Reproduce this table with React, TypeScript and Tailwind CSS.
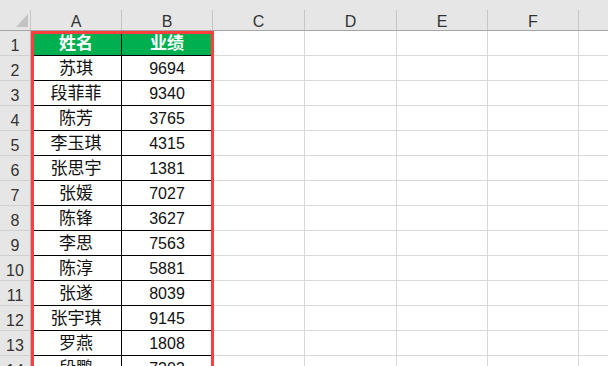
import type { FC } from "react";

const rows: [string, string][] = [
  ["苏琪", "9694"],
  ["段菲菲", "9340"],
  ["陈芳", "3765"],
  ["李玉琪", "4315"],
  ["张思宇", "1381"],
  ["张媛", "7027"],
  ["陈锋", "3627"],
  ["李思", "7563"],
  ["陈淳", "5881"],
  ["张遂", "8039"],
  ["张宇琪", "9145"],
  ["罗燕", "1808"],
  ["段鹏", "7303"],
];

const cols = [
  { name: "A", w: "w-[91px]" },
  { name: "B", w: "w-[91px]" },
  { name: "C", w: "w-[92px]" },
  { name: "D", w: "w-[92px]" },
  { name: "E", w: "w-[91px]" },
  { name: "F", w: "w-[91px]" },
];

const font = { fontFamily: '"Liberation Sans", "Noto Sans CJK SC", sans-serif' };

const EmptyCells: FC = () => (
  <>
    <div className="w-[92px] shrink-0 border-r border-b border-[#d9d9d9]" />
    <div className="w-[92px] shrink-0 border-r border-b border-[#d9d9d9]" />
    <div className="w-[91px] shrink-0 border-r border-b border-[#d9d9d9]" />
    <div className="w-[91px] shrink-0 border-r border-b border-[#d9d9d9]" />
    <div className="flex-1 border-b border-[#d9d9d9]" />
  </>
);

const RowHead: FC<{ n: number }> = ({ n }) => (
  <div className="w-[31px] shrink-0 bg-[#e6e6e6] border-b border-r border-b-[#d0d0d0] border-r-[#b5b5b5] flex items-center justify-center pt-[5px] text-[16px] text-[#333]">
    {n}
  </div>
);

export default function App() {
  return (
    <div className="w-[608px] h-[366px] overflow-hidden bg-white relative" style={font}>
      <div className="h-[10px] bg-[#e6e6e6]" />
      <div className="h-[21px] flex bg-[#e6e6e6] border-b border-[#a6a6a6]">
        <div className="w-[31px] shrink-0 border-r border-[#c6c6c6] relative">
          <svg className="absolute left-[16px] top-[4px]" width="12" height="13" viewBox="0 0 12 13">
            <polygon points="12,0 12,13 0,13" fill="#c3c3c3" />
          </svg>
        </div>
        {cols.map((c) => (
          <div
            key={c.name}
            className={`${c.w} shrink-0 border-r border-[#c6c6c6] flex items-center justify-center pt-[4px] text-[16px] text-[#333]`}
          >
            {c.name}
          </div>
        ))}
        <div className="flex-1" />
      </div>

      <div className="flex h-[25px]">
        <RowHead n={1} />
        <div className="w-[91px] shrink-0 bg-[#00b050] border-r border-b border-black flex items-center justify-center pt-[2px] text-[17px] font-bold text-white">
          姓名
        </div>
        <div className="w-[91px] shrink-0 bg-[#00b050] border-r border-b border-black flex items-center justify-center pt-[2px] text-[17px] font-bold text-white">
          业绩
        </div>
        <EmptyCells />
      </div>

      {rows.map(([name, score], i) => (
        <div key={name + i} className="flex h-[25px]">
          <RowHead n={i + 2} />
          <div className="w-[91px] shrink-0 border-r border-b border-black flex items-center justify-center pt-[2px] text-[17px] text-[#111]">
            {name}
          </div>
          <div className="w-[91px] shrink-0 border-r border-b border-black flex items-center justify-center pt-[2px] text-[16px] text-[#111]">
            {score}
          </div>
          <EmptyCells />
        </div>
      ))}

      <div className="absolute left-[31px] top-[31px] w-[183px] h-[360px] border-[3px] border-[#ff3f3f] pointer-events-none" />
    </div>
  );
}
